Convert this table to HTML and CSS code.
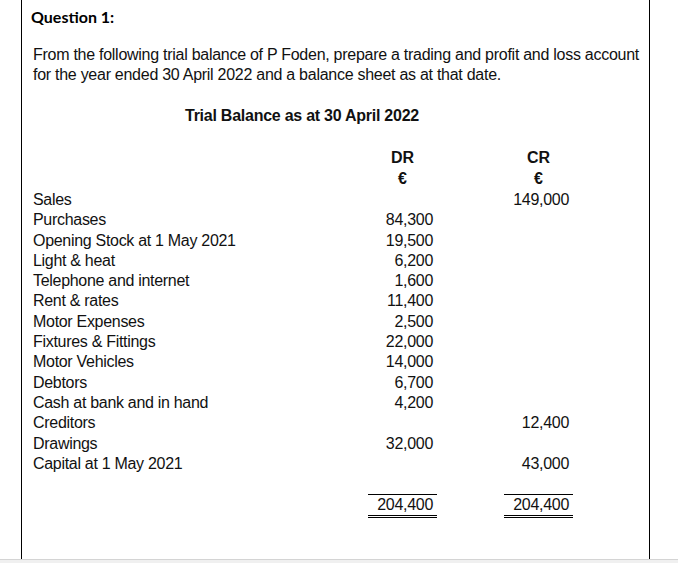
FILE: index.html
```html
<!DOCTYPE html>
<html>
<head>
<meta charset="utf-8">
<link rel="stylesheet" href="styles.css">
</head>
<body>
<div class="page">
  <div class="q-title">Question 1:</div>
  <p class="intro">From the following trial balance of P Foden, prepare a trading and profit and loss account for the year ended 30 April 2022 and a balance sheet as at that date.</p>
  <div class="tb-title">Trial Balance as at 30 April 2022</div>
  <div class="tb">
    <div class="row head"><span class="lbl"></span><span class="dr">DR</span><span class="cr">CR</span></div>
    <div class="row head cur"><span class="lbl"></span><span class="dr">€</span><span class="cr">€</span></div>
    <div class="row"><span class="lbl">Sales</span><span class="dr"></span><span class="cr">149,000</span></div>
    <div class="row"><span class="lbl">Purchases</span><span class="dr">84,300</span><span class="cr"></span></div>
    <div class="row"><span class="lbl">Opening Stock at 1 May 2021</span><span class="dr">19,500</span><span class="cr"></span></div>
    <div class="row"><span class="lbl">Light &amp; heat</span><span class="dr">6,200</span><span class="cr"></span></div>
    <div class="row"><span class="lbl">Telephone and internet</span><span class="dr">1,600</span><span class="cr"></span></div>
    <div class="row"><span class="lbl">Rent &amp; rates</span><span class="dr">11,400</span><span class="cr"></span></div>
    <div class="row"><span class="lbl">Motor Expenses</span><span class="dr">2,500</span><span class="cr"></span></div>
    <div class="row"><span class="lbl">Fixtures &amp; Fittings</span><span class="dr">22,000</span><span class="cr"></span></div>
    <div class="row"><span class="lbl">Motor Vehicles</span><span class="dr">14,000</span><span class="cr"></span></div>
    <div class="row"><span class="lbl">Debtors</span><span class="dr">6,700</span><span class="cr"></span></div>
    <div class="row"><span class="lbl">Cash at bank and in hand</span><span class="dr">4,200</span><span class="cr"></span></div>
    <div class="row"><span class="lbl">Creditors</span><span class="dr"></span><span class="cr">12,400</span></div>
    <div class="row"><span class="lbl">Drawings</span><span class="dr">32,000</span><span class="cr"></span></div>
    <div class="row"><span class="lbl">Capital at 1 May 2021</span><span class="dr"></span><span class="cr">43,000</span></div>
    <div class="row total"><span class="lbl"></span><span class="dr">204,400</span><span class="cr">204,400</span></div>
  </div>
</div>
<div class="statusbar"></div>
</body>
</html>
```
FILE: styles.css
```css
html, body {
  margin: 0;
  padding: 0;
  background: #ffffff;
  overflow: hidden;
}
body {
  width: 678px;
  height: 563px;
  font-family: "Liberation Sans", Arial, sans-serif;
  color: #111;
}
.page {
  margin-left: 21px;
  width: 629px;
  height: 559px;
  border-left: 1.5px solid #000;
  border-right: 1.5px solid #000;
  box-sizing: border-box;
  padding-top: 7px;
  padding-left: 9px;
}
.q-title {
  font-family: Lato, "Open Sans", sans-serif;
  font-weight: 700;
  font-size: 16px;
  line-height: 20px;
  color: #000;
}
.intro {
  margin: 18px 0 0 2px;
  font-size: 16px;
  line-height: 20px;
  letter-spacing: -0.27px;
  width: 612px;
}
.tb-title {
  margin-top: 21px;
  padding-left: 154px;
  font-size: 16px;
  font-weight: 700;
  line-height: 20px;
  letter-spacing: -0.25px;
}
.tb {
  margin-top: 21px;
  margin-left: 2px;
  font-size: 16px;
  letter-spacing: -0.3px;
}
.row {
  display: grid;
  grid-template-columns: 268px 69px 69px;
  column-gap: 67px;
  line-height: 20.3px;
  height: 20.3px;
}
.row .dr, .row .cr {
  text-align: right;
  padding-right: 4px;
}
.row.head {
  font-weight: 700;
  font-size: 16px;
  line-height: 21px;
  height: 21px;
  letter-spacing: 0;
}
.row.head .dr, .row.head .cr {
  text-align: center;
  padding-right: 0;
}
.row.cur {
  margin-bottom: 1px;
}
.row.total {
  margin-top: 20px;
  height: auto;
  line-height: 19px;
}
.row.total .dr, .row.total .cr {
  border-top: 1px solid #000;
  border-bottom: 3px double #000;
  padding-bottom: 1px;
}
.statusbar {
  height: 4px;
  background: #f0f0f0;
  border-top: 1px solid #d4d4d4;
}
```
